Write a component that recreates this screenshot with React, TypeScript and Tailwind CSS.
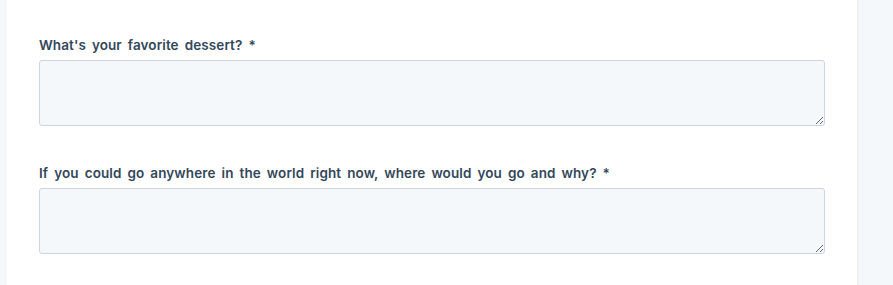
import React from "react";

const questions = [
  { id: "dessert", label: "What's your favorite dessert?" },
  { id: "travel", label: "If you could go anywhere in the world right now, where would you go and why?" },
];

function Field({ id, label }: { id: string; label: string }) {
  return (
    <div className="mb-[39px]">
      <label
        htmlFor={id}
        className="block mb-[7px] text-[13.5px] leading-4 font-semibold [word-spacing:2.5px] tracking-[0.1px] text-[#33475b]"
      >
        {label} <span>*</span>
      </label>
      <textarea
        id={id}
        className="block w-full h-[66px] rounded-[3px] border border-[#cbd6e2] bg-[#f5f8fa] px-3 py-2 text-sm text-[#33475b] outline-none"
      />
    </div>
  );
}

export default function App() {
  return (
    <div className="min-h-[285px] bg-[#f5f8fa] pl-[7px] flex font-['Inter',sans-serif]">
      <div className="w-[850px] bg-white px-8 pt-[37px] shadow-[1px_0_2px_rgba(0,0,0,0.05)]">
        {questions.map((q) => (
          <Field key={q.id} {...q} />
        ))}
      </div>
    </div>
  );
}
